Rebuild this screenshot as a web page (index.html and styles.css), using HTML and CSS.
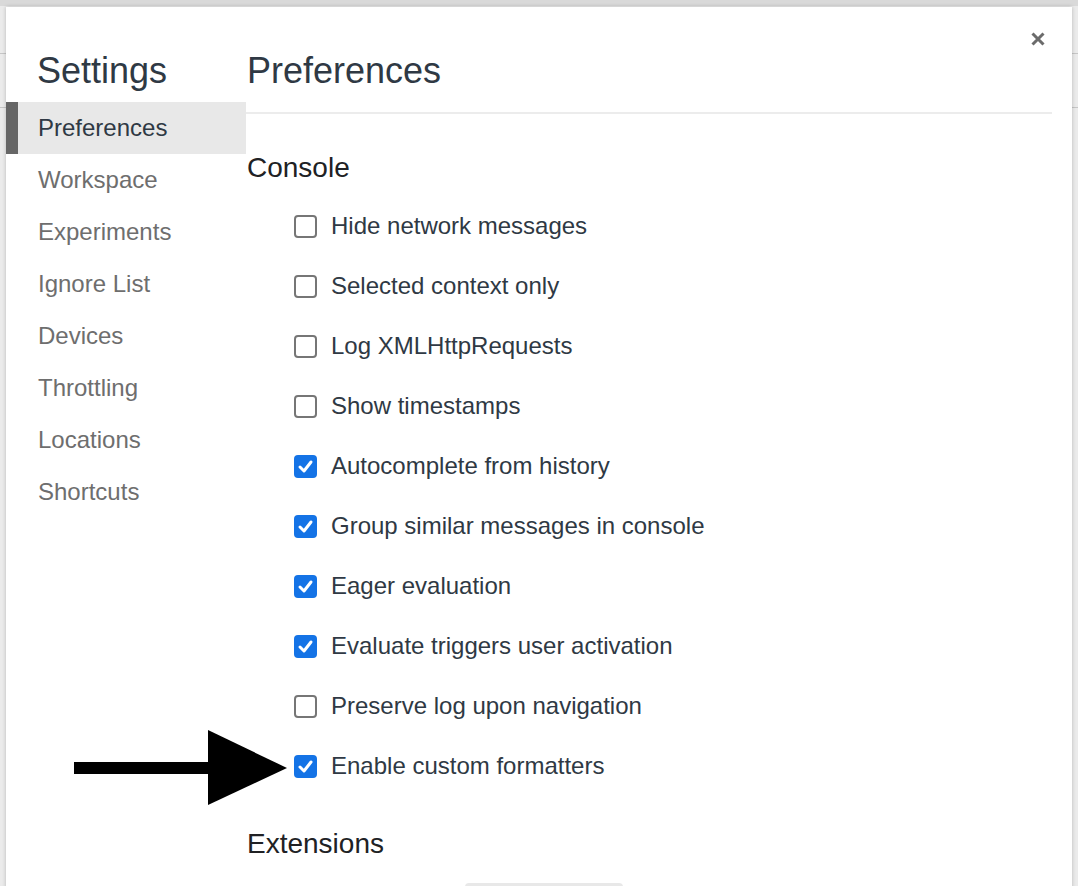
FILE: index.html
```html
<!DOCTYPE html>
<html lang="en">
<head>
<meta charset="utf-8">
<title>Settings</title>
<link rel="stylesheet" href="styles.css">
</head>
<body>
<div class="backdrop">
  <div class="bd-top"></div>
  <div class="bd-row1"></div>
  <div class="bd-row2"></div>
</div>

<div class="dialog">
  <aside class="sidebar">
    <h1 class="title">Settings</h1>
    <nav class="nav">
      <div class="nav-item selected">Preferences</div>
      <div class="nav-item">Workspace</div>
      <div class="nav-item">Experiments</div>
      <div class="nav-item">Ignore List</div>
      <div class="nav-item">Devices</div>
      <div class="nav-item">Throttling</div>
      <div class="nav-item">Locations</div>
      <div class="nav-item">Shortcuts</div>
    </nav>
  </aside>

  <main class="content">
    <h2 class="page-title">Preferences</h2>
    <h3 class="section-title">Console</h3>
    <ul class="options">
      <li class="option"><span class="box"></span><span class="label">Hide network messages</span></li>
      <li class="option"><span class="box"></span><span class="label">Selected context only</span></li>
      <li class="option"><span class="box"></span><span class="label">Log XMLHttpRequests</span></li>
      <li class="option"><span class="box"></span><span class="label">Show timestamps</span></li>
      <li class="option"><span class="box checked"><svg viewBox="0 0 23 23"><path d="M6 12 L10 16 L17 7"/></svg></span><span class="label">Autocomplete from history</span></li>
      <li class="option"><span class="box checked"><svg viewBox="0 0 23 23"><path d="M6 12 L10 16 L17 7"/></svg></span><span class="label">Group similar messages in console</span></li>
      <li class="option"><span class="box checked"><svg viewBox="0 0 23 23"><path d="M6 12 L10 16 L17 7"/></svg></span><span class="label">Eager evaluation</span></li>
      <li class="option"><span class="box checked"><svg viewBox="0 0 23 23"><path d="M6 12 L10 16 L17 7"/></svg></span><span class="label">Evaluate triggers user activation</span></li>
      <li class="option"><span class="box"></span><span class="label">Preserve log upon navigation</span></li>
      <li class="option"><span class="box checked"><svg viewBox="0 0 23 23"><path d="M6 12 L10 16 L17 7"/></svg></span><span class="label">Enable custom formatters</span></li>
    </ul>
    <h3 class="section-title extensions">Extensions</h3>
    <div class="select-stub"></div>
  </main>

  <button class="close" aria-label="Close">
    <svg viewBox="0 0 14 14"><path d="M1.5 1.5 L12.5 12.5 M12.5 1.5 L1.5 12.5"/></svg>
  </button>
</div>

<svg class="arrow" viewBox="0 0 214 76">
  <rect x="0" y="32" width="135" height="12"/>
  <polygon points="134,0 213,38 134,75"/>
</svg>
</body>
</html>
```

FILE: styles.css
```css
html, body {
  margin: 0;
  padding: 0;
}
body {
  width: 1078px;
  height: 886px;
  overflow: hidden;
  position: relative;
  background: #ebebeb;
  font-family: "Liberation Sans", Arial, Helvetica, sans-serif;
}

.backdrop .bd-top {
  height: 6px;
  background: #d9d9d9;
}
.backdrop .bd-row1 {
  height: 47px;
  border-bottom: 1px solid #c6c6c6;
}
.backdrop .bd-row2 {
  height: 53px;
  border-bottom: 1px solid #c6c6c6;
}

.dialog {
  position: absolute;
  left: 6px;
  top: 7px;
  right: 6px;
  bottom: -40px;
  background: #fff;
  box-shadow: 0 0 4px rgba(0, 0, 0, 0.22);
  display: grid;
  grid-template-columns: 240px 1fr;
}

.title {
  margin: 0;
  padding: 44px 0 11px 31px;
  font-size: 36px;
  line-height: 40px;
  font-weight: normal;
  color: #2f3944;
}

.nav-item {
  height: 52px;
  line-height: 52px;
  padding-left: 32px;
  font-size: 24px;
  color: #6e6e6e;
}
.nav-item.selected {
  background: #e8e8e8;
  color: #2f3944;
  box-shadow: inset 12px 0 0 #666666;
}

.content {
  padding-right: 20px;
}
.page-title {
  margin: 0;
  padding: 44px 0 21px 1px;
  font-size: 36px;
  line-height: 40px;
  font-weight: normal;
  color: #2f3944;
  border-bottom: 2px solid #ececec;
}

.section-title {
  margin: 38px 0 12px 1px;
  font-size: 28px;
  line-height: 32px;
  font-weight: normal;
  color: #202124;
}
.section-title.extensions {
  margin: 32px 0 0 1px;
}

.options {
  list-style: none;
  margin: 0;
  padding: 0 0 0 48px;
}
.option {
  height: 60px;
  display: flex;
  align-items: center;
  gap: 14px;
}
.box {
  box-sizing: border-box;
  width: 23px;
  height: 23px;
  border: 2px solid #767676;
  border-radius: 4px;
  background: #fff;
  flex: none;
  display: flex;
}
.box.checked {
  border: none;
  background: #1473e6;
}
.box svg {
  width: 23px;
  height: 23px;
}
.box svg path {
  fill: none;
  stroke: #fff;
  stroke-width: 3;
  stroke-linecap: round;
  stroke-linejoin: round;
}
.label {
  font-size: 24px;
  color: #2f3944;
}

.select-stub {
  margin: 23px 0 0 219px;
  width: 158px;
  height: 30px;
  background: #e8e8e8;
  border-radius: 4px;
}

.close {
  position: absolute;
  top: 25px;
  right: 27px;
  width: 14px;
  height: 14px;
  padding: 0;
  border: none;
  background: none;
}
.close svg {
  display: block;
  width: 14px;
  height: 14px;
}
.close svg path {
  stroke: #6b6b6b;
  stroke-width: 3;
  fill: none;
}

.arrow {
  position: absolute;
  left: 74px;
  top: 730px;
  width: 214px;
  height: 76px;
  fill: #000;
}
```
